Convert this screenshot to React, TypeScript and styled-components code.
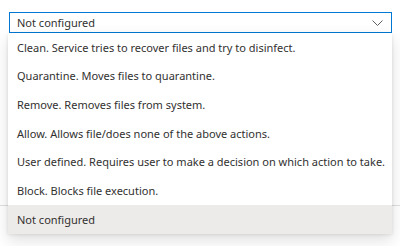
import { createGlobalStyle } from 'styled-components'
import styled from 'styled-components'

const GlobalStyle = createGlobalStyle`
	html, body {
		margin: 0;
		padding: 0;
		background: #ffffff;
	}
	body {
		font-family: "Noto Sans", "Open Sans", sans-serif;
		color: #323130;
	}
`

const Page = styled.div`
	position: relative;
	width: 400px;
	height: 246px;
	overflow: hidden;
	padding-top: 12px;
	box-sizing: border-box;
`

const Field = styled.div`
	margin: 0 8px 0 9px;
	height: 21px;
	border: 1.5px solid #0078d4;
	box-sizing: border-box;
	display: flex;
	align-items: center;
	justify-content: space-between;
	padding: 0 8px 0 7px;
	font-size: 11px;
	color: #323130;
`

const Chevron = styled.svg`
	width: 11px;
	height: 6px;
	margin-top: 1px;
`

const Divider = styled.hr`
	margin: 172px 0 0;
	border: none;
	border-top: 1px solid #e1dfdd;
`

const Callout = styled.ul`
	position: absolute;
	top: 33px;
	left: 8px;
	width: 384px;
	margin: 0;
	padding: 0;
	list-style: none;
	background: #ffffff;
	box-shadow: 0 6.4px 14.4px rgba(0, 0, 0, 0.13), 0 1.2px 3.6px rgba(0, 0, 0, 0.11);
`

const Option = styled.li<{ $selected?: boolean }>`
	height: 28.67px;
	display: flex;
	align-items: center;
	padding-left: 9px;
	font-size: 11px;
	white-space: nowrap;
	background: ${p => (p.$selected ? '#edebe9' : 'transparent')};
`

const options = [
	'Clean. Service tries to recover files and try to disinfect.',
	'Quarantine. Moves files to quarantine.',
	'Remove. Removes files from system.',
	'Allow. Allows file/does none of the above actions.',
	'User defined. Requires user to make a decision on which action to take.',
	'Block. Blocks file execution.',
	'Not configured'
]

const App = () => {
	const selected = 'Not configured'
	return (
		<>
			<GlobalStyle />
			<Page>
				<Field>
					<span>{selected}</span>
					<Chevron viewBox="0 0 11 6">
						<path d="M0.5 0.5 L5.5 5.5 L10.5 0.5" fill="none" stroke="#605e5c" strokeWidth="1" />
					</Chevron>
				</Field>
				<Divider />
				<Callout>
					{options.map(o => (
						<Option key={o} $selected={o === selected}>
							{o}
						</Option>
					))}
				</Callout>
			</Page>
		</>
	)
}

export default App
